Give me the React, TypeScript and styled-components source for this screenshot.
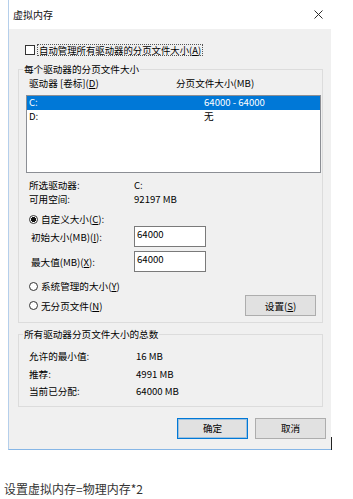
import styled, { createGlobalStyle } from "styled-components";

const GlobalStyle = createGlobalStyle`
  html, body {
    margin: 0;
    padding: 0;
    background: #fff;
  }
  body {
    font-family: "Noto Sans CJK SC", "Microsoft YaHei", "Liberation Sans", sans-serif;
    color: #000;
  }
  u {
    text-underline-offset: 1px;
  }
`;

const drives = [
  { name: "C:", size: "64000 - 64000", selected: true },
  { name: "D:", size: "无", selected: false },
];

export default function App() {
  return (
    <>
      <GlobalStyle />
      <Dialog>
        <TitleBar>
          <span>虚拟内存</span>
          <svg width="9" height="9" viewBox="0 0 9 9">
            <path d="M0.5 0.5 L8.5 8.5 M8.5 0.5 L0.5 8.5" stroke="#2b2b2b" strokeWidth="1" fill="none" />
          </svg>
        </TitleBar>
        <Body>
          <CheckRow>
            <CheckBox />
            <FocusLabel>
              自动管理所有驱动器的分页文件大小(<u>A</u>)
            </FocusLabel>
          </CheckRow>

          <GroupBox>
            <GroupTitle>每个驱动器的分页文件大小</GroupTitle>
            <ListHeader>
              <span>
                驱动器 [卷标](<u>D</u>)
              </span>
              <span>分页文件大小(MB)</span>
            </ListHeader>
            <ListBox>
              {drives.map((d) => (
                <ListRow key={d.name} $selected={d.selected}>
                  <span>{d.name}</span>
                  <span>{d.size}</span>
                </ListRow>
              ))}
            </ListBox>
            <InfoBlock>
              <InfoRow>
                <span>所选驱动器:</span>
                <span>C:</span>
              </InfoRow>
              <InfoRow>
                <span>可用空间:</span>
                <span>92197 MB</span>
              </InfoRow>
            </InfoBlock>

            <RadioRow $gap={6}>
              <Radio $checked />
              <span>
                自定义大小(<u>C</u>):
              </span>
            </RadioRow>
            <FieldRow $gap={0}>
              <span>
                初始大小(MB)(<u>I</u>):
              </span>
              <TextBox readOnly value="64000" />
            </FieldRow>
            <FieldRow $gap={4}>
              <span>
                最大值(MB)(<u>X</u>):
              </span>
              <TextBox readOnly value="64000" />
            </FieldRow>
            <RadioRow $gap={7}>
              <Radio />
              <span>
                系统管理的大小(<u>Y</u>)
              </span>
            </RadioRow>
            <LastRow>
              <RadioInline>
                <Radio />
                <span>
                  无分页文件(<u>N</u>)
                </span>
              </RadioInline>
              <Button>
                设置(<u>S</u>)
              </Button>
            </LastRow>
          </GroupBox>

          <GroupBox $top={11} $bottom={5}>
            <GroupTitle>所有驱动器分页文件大小的总数</GroupTitle>
            <TotalBlock>
              <TotalRow>
                <span>允许的最小值:</span>
                <span>16 MB</span>
              </TotalRow>
              <TotalRow>
                <span>推荐:</span>
                <span>4991 MB</span>
              </TotalRow>
              <TotalRow>
                <span>当前已分配:</span>
                <span>64000 MB</span>
              </TotalRow>
            </TotalBlock>
          </GroupBox>

          <ButtonBar>
            <Button $primary>确定</Button>
            <Button>取消</Button>
          </ButtonBar>
        </Body>
        <EdgeMark />
      </Dialog>
      <Caption>设置虚拟内存=物理内存*2</Caption>
    </>
  );
}

const Dialog = styled.div`
  position: relative;
  width: 323px;
  margin-left: 8px;
  box-sizing: border-box;
  border-left: 1px solid #b5cfeb;
  border-bottom: 1px solid #86b6e6;
  font-size: 9.6px;
`;

const TitleBar = styled.div`
  height: 29px;
  display: flex;
  align-items: center;
  justify-content: space-between;
  padding: 0 8px 0 4px;
  background: #fff;
  font-size: 10px;
  line-height: 14px;
  color: #111;
`;

const Body = styled.div`
  background: #f0f0f0;
  padding: 15px 8px 10px 9px;
`;

const CheckRow = styled.div`
  display: flex;
  align-items: center;
  gap: 2px;
  margin-left: 7px;
  height: 12px;
`;

const CheckBox = styled.div`
  width: 10px;
  height: 10px;
  box-sizing: border-box;
  border: 1px solid #333;
  background: #fff;
`;

const FocusLabel = styled.div`
  border: 1px dotted #555;
  padding: 0 1px;
  line-height: 10px;
  font-size: 9.4px;
`;

const GroupBox = styled.div<{ $top?: number; $bottom?: number }>`
  margin-top: ${(p) => p.$top ?? 13}px;
  border: 1px solid #dcdcdc;
  padding-bottom: ${(p) => p.$bottom ?? 6}px;
`;

const GroupTitle = styled.div`
  width: fit-content;
  margin: -8px 0 0 4px;
  padding: 0 1px;
  background: #f0f0f0;
  line-height: 14px;
`;

const ListHeader = styled.div`
  display: grid;
  grid-template-columns: 147px 1fr;
  padding-left: 10px;
  line-height: 15px;
`;

const ListBox = styled.div`
  margin: 4px 1px 0 7px;
  height: 78px;
  box-sizing: border-box;
  border: 1px solid #8b8e94;
  background: #fff;
`;

const ListRow = styled.div<{ $selected?: boolean }>`
  display: grid;
  grid-template-columns: 175px 1fr;
  height: 14px;
  line-height: 12px;
  padding-left: 2px;
  background: ${(p) => (p.$selected ? "#0078d7" : "transparent")};
  color: ${(p) => (p.$selected ? "#fff" : "#000")};
`;

const InfoBlock = styled.div`
  margin-top: 5px;
`;

const InfoRow = styled.div`
  display: grid;
  grid-template-columns: 105px 1fr;
  padding-left: 10px;
  line-height: 14px;
`;

const RadioRow = styled.div<{ $gap: number }>`
  display: flex;
  align-items: center;
  gap: 3px;
  margin-top: ${(p) => p.$gap}px;
  padding-left: 10px;
  height: 14px;
`;

const RadioInline = styled.div`
  display: flex;
  align-items: center;
  gap: 3px;
`;

const Radio = styled.div<{ $checked?: boolean }>`
  width: 9px;
  height: 9px;
  box-sizing: border-box;
  border-radius: 50%;
  border: 1px solid #333;
  background: ${(p) =>
    p.$checked ? "radial-gradient(circle, #111 0 2.3px, #fff 2.8px)" : "#fff"};
`;

const FieldRow = styled.div<{ $gap: number }>`
  display: grid;
  grid-template-columns: 103px 72px;
  align-items: center;
  margin-top: ${(p) => p.$gap}px;
  padding-left: 12px;
  height: 21px;
`;

const TextBox = styled.input`
  width: 72px;
  height: 21px;
  box-sizing: border-box;
  margin: 0;
  border: 1px solid #7a7a7a;
  padding: 0 2px 6px;
  background: #fff;
  font-family: inherit;
  font-size: 9.6px;
  line-height: 13px;
  color: #000;
  outline: none;
`;

const LastRow = styled.div`
  display: flex;
  align-items: center;
  justify-content: space-between;
  margin-top: 2px;
  padding: 0 6px 0 10px;
`;

const Button = styled.div<{ $primary?: boolean }>`
  width: 71px;
  height: 21px;
  box-sizing: border-box;
  display: flex;
  align-items: center;
  justify-content: center;
  background: #e1e1e1;
  border: 1px solid ${(p) => (p.$primary ? "#0078d7" : "#adadad")};
  box-shadow: ${(p) => (p.$primary ? "inset 0 0 0 1px rgba(0,120,215,0.3)" : "none")};
  line-height: 14px;
`;

const TotalBlock = styled.div`
  margin-top: 7px;
`;

const TotalRow = styled.div`
  display: grid;
  grid-template-columns: 107px 1fr;
  padding-left: 10px;
  line-height: 17.5px;
`;

const ButtonBar = styled.div`
  display: flex;
  justify-content: flex-end;
  gap: 7px;
  margin: 11px -3px 0 0;
`;

const EdgeMark = styled.div`
  position: absolute;
  right: -1px;
  bottom: -1px;
  width: 1px;
  height: 13px;
  background: #222;
`;

const Caption = styled.div`
  margin-top: 31px;
  padding-left: 4px;
  font-size: 12px;
  line-height: 16px;
  color: #333;
`;
